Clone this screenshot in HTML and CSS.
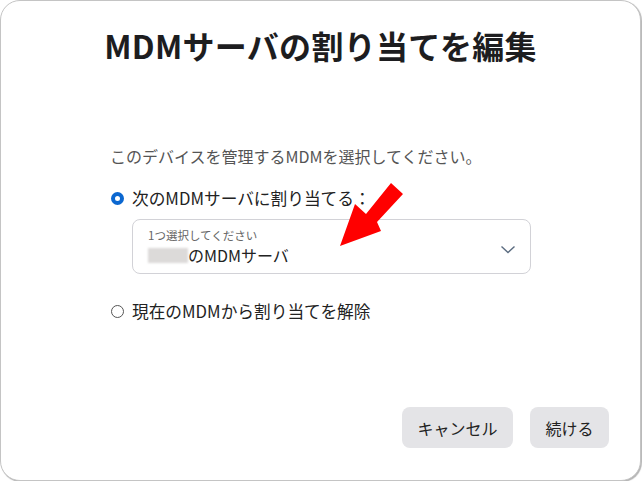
FILE: index.html
```html
<!DOCTYPE html>
<html lang="ja">
<head>
<meta charset="utf-8">
<title>MDMサーバの割り当てを編集</title>
<link rel="stylesheet" href="styles.css">
</head>
<body>
<div class="dialog">
  <h1 class="title">MDMサーバの割り当てを編集</h1>
  <div class="content">
    <p class="desc">このデバイスを管理するMDMを選択してください。</p>
    <div class="option">
      <span class="radio checked"></span>
      <span class="label">次のMDMサーバに割り当てる：</span>
    </div>
    <div class="select">
      <div class="select-text">
        <div class="select-hint">1つ選択してください</div>
        <div class="select-value"><span class="blur"></span>のMDMサーバ</div>
      </div>
      <svg class="chevron" width="16" height="9" viewBox="0 0 16 9"><path d="M1.5 1.5l6.5 6 6.5-6" fill="none" stroke="#5b6c80" stroke-width="1.4"/></svg>
    </div>
    <div class="option second">
      <span class="radio"></span>
      <span class="label">現在のMDMから割り当てを解除</span>
    </div>
  </div>
  <div class="footer">
    <button class="btn">キャンセル</button>
    <button class="btn">続ける</button>
  </div>
  <svg class="arrow" width="642" height="482" viewBox="0 0 642 482"><polygon points="340,246 355,204 366,214 391,183 403,194 377,222 381,231" fill="#ff0000"/></svg>
</div>
</body>
</html>
```

FILE: styles.css
```css
html, body {
  margin: 0;
  padding: 0;
  background: #ffffff;
}
body {
  font-family: "Noto Sans CJK JP", "Noto Sans", sans-serif;
  color: #222;
}
.dialog {
  position: relative;
  box-sizing: border-box;
  width: 641px;
  height: 481px;
  border: 1px solid #c4c4c4;
  border-radius: 20px;
  box-shadow: 1px 1px 1px rgba(0,0,0,0.3);
  display: flex;
  flex-direction: column;
  background: #fff;
}
.title {
  margin: 24px 0 0;
  font-size: 32px;
  line-height: 40px;
  font-weight: 700;
  text-align: center;
  color: #1d1d1f;
  letter-spacing: 0.3px;
}
.content {
  padding: 0 109px 0 109px;
}
.desc {
  margin: 81px 0 0;
  font-size: 16px;
  line-height: 20px;
  color: #555;
}
.option {
  display: flex;
  align-items: center;
  margin-top: 20px;
  height: 24px;
}
.option.second {
  margin-top: 25px;
}
.radio {
  box-sizing: border-box;
  width: 13px;
  height: 13px;
  border-radius: 50%;
  border: 1.5px solid #555;
  margin: 0 8px 0 1px;
  flex: none;
}
.radio.checked {
  border: 4px solid #0b67d0;
}
.label {
  font-size: 16.7px;
  line-height: 24px;
  color: #222;
}
.select {
  margin: 9px 0 0 22px;
  height: 55px;
  box-sizing: border-box;
  border: 1px solid #d2d2d7;
  border-radius: 8px;
  padding: 7px 14px 0 15px;
  display: flex;
  justify-content: space-between;
}
.select-hint {
  font-size: 11.5px;
  line-height: 17px;
  color: #666;
}
.select-value {
  display: flex;
  align-items: center;
  font-size: 16px;
  line-height: 23px;
  color: #222;
}
.blur {
  display: inline-block;
  width: 40px;
  height: 15px;
  background: #dcdad9;
  filter: blur(1px);
}
.chevron {
  margin-top: 18px;
}
.footer {
  margin-top: auto;
  display: flex;
  justify-content: flex-end;
  gap: 17px;
  padding: 0 31px 32px 0;
}
.btn {
  height: 41px;
  padding: 0 15.5px;
  border: none;
  border-radius: 8px;
  background: #e4e4e7;
  color: #222;
  font-family: "Noto Sans CJK JP", "Noto Sans", sans-serif;
  font-size: 16px;
}
.arrow {
  position: absolute;
  left: -1px;
  top: -1px;
  pointer-events: none;
}
```
